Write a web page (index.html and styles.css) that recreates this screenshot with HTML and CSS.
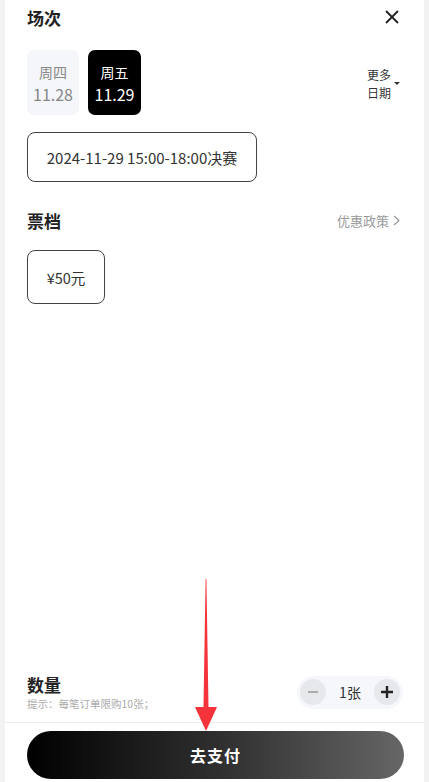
FILE: index.html
```html
<!doctype html>
<html lang="zh-CN">
<head>
  <meta charset="utf-8">
  <meta name="viewport" content="width=device-width,initial-scale=1">
  <title>选择场次</title>
  <link rel="stylesheet" href="styles.css">
</head>
<body>
  <div class="sheet">
    <div class="head">
      <h2>场次</h2>
      <svg class="close" width="16" height="16" viewBox="0 0 16 16"><path d="M2 2L14 14M14 2L2 14" stroke="#222" stroke-width="1.8" fill="none"/></svg>
    </div>

    <div class="dates">
      <div class="day">
        <span>周四</span>
        <span class="num">11.28</span>
      </div>
      <div class="day on">
        <span>周五</span>
        <span class="num">11.29</span>
      </div>
      <div class="more">
        <span>更多<br>日期</span>
        <svg width="6" height="4" viewBox="0 0 6 4"><path d="M0 0H6L3 3Z" fill="#333"/></svg>
      </div>
    </div>

    <div class="opt slot">2024-11-29 15:00-18:00决赛</div>

    <div class="head tier">
      <h2>票档</h2>
      <span class="policy">优惠政策 <svg width="7" height="11" viewBox="0 0 7 11"><path d="M1 1L6 5.5L1 10" stroke="#999" stroke-width="1.2" fill="none"/></svg></span>
    </div>

    <div class="opt price">¥50元</div>

    <div class="spacer"></div>

    <div class="qty">
      <div>
        <h2>数量</h2>
        <p class="tip">提示：每笔订单限购10张；</p>
      </div>
      <div class="stepper">
        <span class="btn minus"><svg width="12" height="12" viewBox="0 0 12 12"><path d="M1 6H11" stroke="#aaa" stroke-width="2"/></svg></span>
        <span class="count">1张</span>
        <span class="btn plus"><svg width="14" height="14" viewBox="0 0 14 14"><path d="M1 7H13M7 1V13" stroke="#222" stroke-width="2.4"/></svg></span>
      </div>
    </div>
  </div>

  <div class="foot">
    <button class="pay">去支付</button>
  </div>

  <svg class="arrow" width="30" height="156" viewBox="0 0 30 156">
    <path d="M14.6 0L15.4 0L17.5 128H26L15 152L4 128H12.5Z" fill="#f5333a"/>
  </svg>
</body>
</html>
```

FILE: styles.css
```css
body{margin:0;background:#f2f2f2;font-family:"Noto Sans CJK SC","Noto Sans",sans-serif;color:#333}
.sheet{margin:0 5px;background:#fff;height:723px;padding:0 22px;box-sizing:border-box;display:flex;flex-direction:column;border-bottom:1px solid #ececec}
.head{display:flex;justify-content:space-between;align-items:center;height:34px}
h2{margin:0;font-size:17px;font-weight:700;color:#222}
.close{margin-right:2px}
.dates{display:flex;gap:9px;margin-top:16px;align-items:flex-start}
.day{width:52px;height:65px;border-radius:7px;background:#f4f6fa;color:#888;display:flex;flex-direction:column;align-items:center;justify-content:center;font-size:14px;line-height:22px}
.day .num{font-size:16px}
.day.on{background:#000;color:#fff;width:53px}
.more{margin-left:auto;display:flex;align-items:center;gap:3px;font-size:12px;line-height:18px;color:#333;margin-top:16px;margin-right:2px}
.opt{border:1.5px solid #444;border-radius:8px;display:flex;align-items:center;justify-content:center;font-size:14.5px;color:#333;box-sizing:border-box}
.slot{width:230px;height:50px;margin-top:17px;font-size:15px}
.tier{margin-top:23px;height:30px}
.policy{font-size:13px;color:#999;display:flex;align-items:center;gap:4px;margin-right:2px}
.price{width:78px;height:54px;margin-top:15px}
.spacer{flex:1}
.qty{display:flex;justify-content:space-between;align-items:center;padding-bottom:11px}
.qty h2{line-height:24px}
.tip{margin:0;font-size:10.5px;color:#aaa;line-height:14px}
.stepper{display:flex;align-items:center;background:#f5f7fa;border-radius:17px;height:33px;padding:0 3px;width:100px;justify-content:space-between;margin-right:-1px}
.btn{width:26px;height:26px;border-radius:50%;background:#e6e8ec;display:flex;align-items:center;justify-content:center}
.count{font-size:14px;color:#333}
.foot{margin:0 5px;background:#fff;height:59px;padding:8px 20px 0 22px;box-sizing:border-box}
.pay{width:100%;height:48px;border:none;border-radius:24px;background:linear-gradient(90deg,#000 0%,#333 55%,#666 100%);color:#fff;font-size:16px;font-weight:700;font-family:inherit;letter-spacing:1px}
.arrow{position:absolute;left:191px;top:579px}
```
